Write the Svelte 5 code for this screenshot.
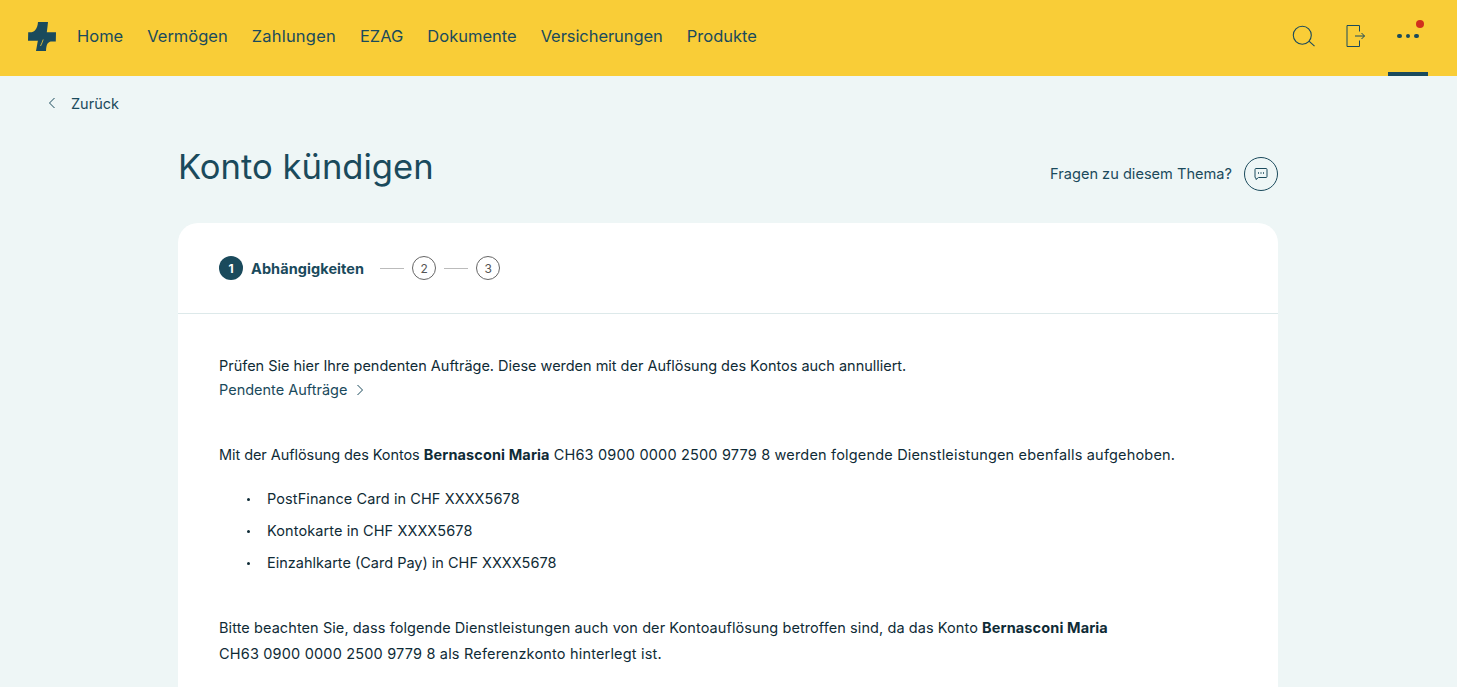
<script>
  const nav = ['Home', 'Vermögen', 'Zahlungen', 'EZAG', 'Dokumente', 'Versicherungen', 'Produkte'];
  const services = ['PostFinance Card in CHF XXXX5678', 'Kontokarte in CHF XXXX5678', 'Einzahlkarte (Card Pay) in CHF XXXX5678'];
</script>

<header class="topbar">
  <svg class="logo" viewBox="0 0 28 29" width="28" height="29" aria-hidden="true">
    <path d="M10 0L20 0C19.700 3.500 19.200 7 18.900 9.500L18.800 10.300L28 10.300L27.800 19.600L24 19.600C20 19.600 18.300 22 18 29L8 29L9.700 19.600L10 18.700L0 18.700L.2 10.300L2 10.300C6.500 10.300 9.500 7 10 0Z" fill="#1a4a5c"/>
    <path d="M15.200 17.500C14.500 20 13.500 22 12.500 24" fill="none" stroke="#f9cd37" stroke-width=".8"/>
  </svg>
  <nav class="nav">
    {#each nav as item}<a href="#top">{item}</a>{/each}
  </nav>
  <div class="tools">
    <button class="tool" aria-label="Suche">
      <svg viewBox="0 0 24 24" width="24" height="24" fill="none" stroke="#1a4a5c" stroke-width="1.1"><circle cx="10.300" cy="11.300" r="9"/><path d="M17 17.200l5.500 5"/></svg>
    </button>
    <button class="tool" aria-label="Abmelden">
      <svg viewBox="0 0 24 24" width="24" height="24" fill="none" stroke="#1a4a5c" stroke-width="1"><path d="M15.500 7.500V1.500H3v21h12.500v-6"/><path d="M11 12h9.500M17.500 9l3 3-3 3"/></svg>
    </button>
    <button class="tool more" aria-label="Mehr">
      <span class="dots"><i></i><i></i><i></i></span>
      <span class="badge"></span>
    </button>
  </div>
</header>

<main class="page">
  <a class="back" href="#top">
    <svg viewBox="0 0 8 12" width="8" height="12" fill="none" stroke="#1a4a5c" stroke-width="1"><path d="M6.500 1L1.500 6l5 5"/></svg>
    Zurück
  </a>
  <div class="column">
    <div class="head">
      <h1>Konto kündigen</h1>
      <a class="help" href="#top">
        <span class="help-text">Fragen zu diesem Thema?</span>
        <span class="help-icon">
          <svg viewBox="0 0 14 14" width="14" height="14" fill="none" stroke="#1a4a5c" stroke-width="1"><path d="M2 1.500h10a1 1 0 0 1 1 1v7a1 1 0 0 1-1 1H4.500L2 12.500V11a1 1 0 0 1-1-1V2.500a1 1 0 0 1 1-1z"/><path d="M4 6h1M6.500 6h1M9 6h1" stroke-width="1.400"/></svg>
        </span>
      </a>
    </div>
    <section class="card">
      <div class="steps">
        <span class="step active">1</span>
        <strong>Abhängigkeiten</strong>
        <span class="line"></span>
        <span class="step">2</span>
        <span class="line short"></span>
        <span class="step">3</span>
      </div>
      <div class="body">
        <p class="intro">Prüfen Sie hier Ihre pendenten Aufträge. Diese werden mit der Auflösung des Kontos auch annulliert.</p>
        <a class="link" href="#top">Pendente Aufträge
          <svg viewBox="0 0 8 12" width="8" height="12" fill="none" stroke="#1a4a5c" stroke-width="1"><path d="M1.500 1l5 5-5 5"/></svg>
        </a>
        <p class="para"><span class="tight">Mit der Auflösung des Kontos</span> <b>Bernasconi Maria</b> <span class="wide">CH63 0900 0000 2500 9779 8 werden folgende Dienstleistungen ebenfalls aufgehoben.</span></p>
        <ul>
          {#each services as s}<li>{s}</li>{/each}
        </ul>
        <p class="para last"><span class="mid">Bitte beachten Sie, dass folgende Dienstleistungen auch von der Kontoauflösung betroffen sind, da das Konto</span> <b>Bernasconi Maria</b><br /><span class="wide">CH63 0900 0000 2500 9779 8 als Referenzkonto hinterlegt ist.</span></p>
      </div>
    </section>
  </div>
</main>

<style>
  :global(body) {
    margin: 0;
    background: #eef6f6;
    font-family: Inter, "Liberation Sans", sans-serif;
    color: #0f2b36;
    overflow: hidden;
  }
  .topbar {
    height: 76px;
    background: #f9cd37;
    display: flex;
    align-items: center;
    padding: 0 29px 0 28px;
    box-sizing: border-box;
  }
  .logo { flex: none; margin: -4px 21px 0 0; }
  .nav { display: flex; gap: 24px; padding-bottom: 4px; }
  .nav a {
    color: #1a4a5c;
    text-decoration: none;
    font-size: 16.500px;
    white-space: nowrap;
  }
  .nav a:nth-child(3) { letter-spacing: .2px; }
  .nav a:nth-child(6) { letter-spacing: -.07px; }
  .tools { margin-left: auto; display: flex; align-items: center; height: 100%; gap: 8px; }
  .tool {
    width: 44px;
    height: 100%;
    background: none;
    border: 0;
    padding: 0 0 4px;
    box-sizing: border-box;
    display: flex;
    align-items: center;
    justify-content: center;
    position: relative;
  }
  .more { width: 40px; margin-left: 2px; border-bottom: 4px solid #1a4a5c; padding: 0; }
  .dots { display: flex; gap: 4.200px; }
  .dots i { width: 4.500px; height: 4.500px; border-radius: 50%; background: #1a4a5c; }
  .badge { position: absolute; top: 20px; right: 4px; width: 8px; height: 8px; border-radius: 50%; background: #d22f1d; }
  .page { display: block; }
  .back {
    display: flex;
    align-items: center;
    gap: 15px;
    height: 54px;
    padding-left: 48px;
    font-size: 14.500px;
    color: #1a4a5c;
    text-decoration: none;
  }
  .column { width: 1100px; margin-left: 178px; }
  .head { display: flex; justify-content: space-between; align-items: flex-start; height: 93px; }
  h1 { margin: 14px 0 0; font-size: 34.600px; line-height: 44px; font-weight: 400; color: #1a4a5c; }
  .help { display: flex; align-items: center; gap: 12px; margin-top: 27px; font-size: 14.600px; color: #1a4a5c; text-decoration: none; }
  .help-text { margin-bottom: 1px; }
  .help-icon { width: 32px; height: 32px; border: 1px solid #1a4a5c; border-radius: 50%; display: flex; align-items: center; justify-content: center; }
  .card { background: #fff; border-radius: 20px 20px 0 0; height: 600px; }
  .steps {
    height: 90px;
    border-bottom: 1px solid #dde9ea;
    display: flex;
    align-items: center;
    padding-left: 41px;
    font-size: 14.500px;
    color: #1a4a5c;
  }
  .step {
    width: 22px; height: 22px; border: 1px solid #666; border-radius: 50%;
    display: flex; align-items: center; justify-content: center;
    font-size: 12px; color: #555;
  }
  .step.active { width: 24px; height: 24px; border: 0; background: #1a4a5c; color: #fff; font-weight: 700; }
  strong { margin-left: 8px; font-weight: 700; letter-spacing: .07px; }
  .line { width: 24px; height: 1px; background: #bbb; margin: 0 8px 0 16px; }
  .line.short { margin: 0 8px; }
  .body { padding: 40px 41px 0; font-size: 14.500px; line-height: 24px; }
  p { margin: 0; }
  .intro { letter-spacing: -.02px; }
  .link { display: inline-flex; align-items: center; gap: 9px; color: #1a4a5c; text-decoration: none; }
  .para { margin-top: 41px; }
  .para b { letter-spacing: .12px; }
  .tight { letter-spacing: -.07px; }
  .mid { letter-spacing: .08px; }
  .wide { letter-spacing: .18px; }
  ul { margin: 16px 0 0; padding: 0 0 0 28px; list-style: none; }
  li { height: 32px; line-height: 32px; display: flex; align-items: center; letter-spacing: .09px; }
  li:nth-child(3) { letter-spacing: 0; }
  li::before { content: ""; width: 3px; height: 3px; border-radius: 50%; background: #0f2b36; margin-right: 17px; }
  .last { margin-top: 36px; line-height: 26px; }
</style>
